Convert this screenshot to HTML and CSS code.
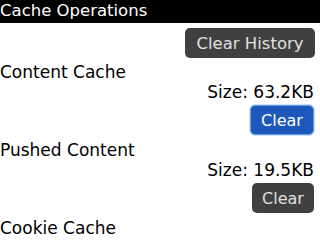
FILE: index.html
```html
<!DOCTYPE html>
<html>
<head>
<meta charset="utf-8">
<link rel="stylesheet" href="styles.css">
</head>
<body>
<div class="screen">
  <div class="title">Cache Operations</div>
  <div class="btnrow top"><span class="btn dark wide">Clear History</span></div>
  <div class="label first">Content Cache</div>
  <div class="size">Size: 63.2KB</div>
  <div class="btnrow"><span class="btn focus">Clear</span></div>
  <div class="label">Pushed Content</div>
  <div class="size">Size: 19.5KB</div>
  <div class="btnrow"><span class="btn dark small">Clear</span></div>
  <div class="label">Cookie Cache</div>
</div>
</body>
</html>
```

FILE: styles.css
```css
html, body {
  margin: 0;
  padding: 0;
  background: #ffffff;
}
.screen {
  width: 320px;
  height: 240px;
  overflow: hidden;
  display: flex;
  flex-direction: column;
  font-family: "DejaVu Sans", sans-serif;
  font-size: 17px;
  color: #000;
}
.title {
  flex: none;
  background: #000;
  color: #fff;
  height: 23px;
  line-height: 22px;
  font-size: 16.5px;
}
.btnrow {
  flex: none;
  display: flex;
  justify-content: flex-end;
  padding-right: 5px;
  margin-top: 3px;
}
.btnrow.top {
  margin-top: 5px;
}
.btn {
  display: flex;
  align-items: center;
  justify-content: center;
  height: 30px;
  box-sizing: border-box;
  border-radius: 5px;
  font-size: 16px;
  white-space: nowrap;
}
.dark {
  background: #404040;
  color: #e0e0e0;
}
.wide {
  width: 130px;
  font-size: 16.5px;
}
.small {
  width: 62px;
  margin-right: 1px;
}
.focus {
  background: #1e58ba;
  color: #fff;
  border: 1px solid #6a9be4;
  box-shadow: 0 0 0 1px #cfe0f7;
  width: 64px;
  margin-right: 1px;
}
.label {
  flex: none;
  line-height: 20px;
  height: 20px;
  margin-top: 5px;
}
.label.first {
  margin-top: 4px;
}
.size {
  flex: none;
  line-height: 20px;
  height: 20px;
  text-align: right;
  padding-right: 6px;
}
```
